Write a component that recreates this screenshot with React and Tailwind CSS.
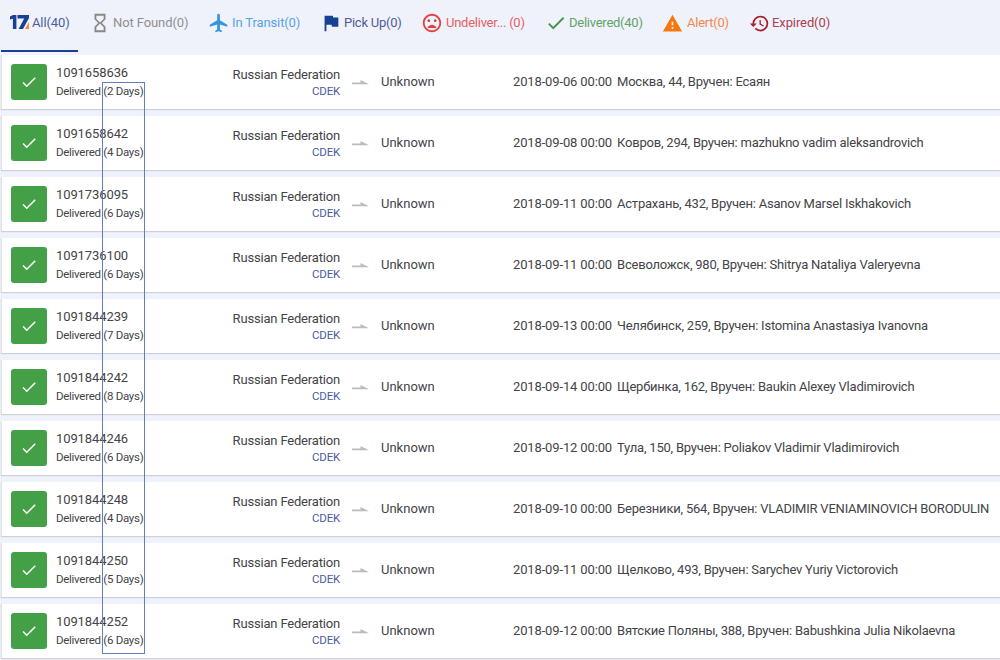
import React from "react";
import { MdFlight, MdFlag, MdMoodBad, MdCheck, MdWarning, MdHistory, MdHourglassEmpty } from "react-icons/md";

const tabs = [
  { label: "Not Found(0)", Icon: MdHourglassEmpty, box: "w-[118px] tracking-[-0.1px]", icon: "size-[22px] -ml-0.5 mr-[2px]", color: "text-[#888888]", text: "text-[#8f8f93]" },
  { label: "In Transit(0)", Icon: MdFlight, box: "w-[112px] tracking-[-0.12px]", icon: "size-[22px] mr-[2px] -ml-px", color: "text-[#3794e0]", text: "text-[#55a4e4]" },
  { label: "Pick Up(0)", Icon: MdFlag, box: "w-[102px] tracking-[-0.25px]", icon: "size-[22px] mr-[2px] -ml-[1px]", color: "text-[#164194]", text: "text-[#4f5b9c]" },
  { label: "Undeliver... (0)", Icon: MdMoodBad, box: "w-[124px] tracking-[-0.25px]", icon: "size-[22px] mr-[3px] -ml-0.5", color: "text-[#e34342]", text: "text-[#e66063]" },
  { label: "Delivered(40)", Icon: MdCheck, box: "w-[117px] tracking-[-0.25px]", icon: "size-[22px] mr-[2px] -ml-0.5", color: "text-[#46954e]", text: "text-[#5fa368]" },
  { label: "Alert(0)", Icon: MdWarning, box: "w-[86px] tracking-[-0.25px]", icon: "size-[21px] mr-[4px] -ml-0.5", color: "text-[#f5780f]", text: "text-[#f0894c]" },
  { label: "Expired(0)", Icon: MdHistory, box: "w-[100px] tracking-[-0.1px]", icon: "size-[21px] mr-[2px] -ml-px", color: "text-[#a91f2c]", text: "text-[#ac4050]" },
];

const rows = [
  ["1091658636", 2, "2018-09-06 00:00", "Москва, 44, Вручен: Есаян"],
  ["1091658642", 4, "2018-09-08 00:00", "Ковров, 294, Вручен: mazhukno vadim aleksandrovich"],
  ["1091736095", 6, "2018-09-11 00:00", "Астрахань, 432, Вручен: Asanov Marsel Iskhakovich"],
  ["1091736100", 6, "2018-09-11 00:00", "Всеволожск, 980, Вручен: Shitrya Nataliya Valeryevna"],
  ["1091844239", 7, "2018-09-13 00:00", "Челябинск, 259, Вручен: Istomina Anastasiya Ivanovna"],
  ["1091844242", 8, "2018-09-14 00:00", "Щербинка, 162, Вручен: Baukin Alexey Vladimirovich"],
  ["1091844246", 6, "2018-09-12 00:00", "Тула, 150, Вручен: Poliakov Vladimir Vladimirovich"],
  ["1091844248", 4, "2018-09-10 00:00", "Березники, 564, Вручен: VLADIMIR VENIAMINOVICH BORODULIN"],
  ["1091844250", 5, "2018-09-11 00:00", "Щелково, 493, Вручен: Sarychev Yuriy Victorovich"],
  ["1091844252", 6, "2018-09-12 00:00", "Вятские Поляны, 388, Вручен: Babushkina Julia Nikolaevna"],
];

function Logo() {
  return (
    <svg className="h-[15px] w-5 shrink-0" viewBox="0 0 20 15">
      <path d="M0 1.5 3 0h3.4v14H2.9V3.8L0 4.4z" fill="#164194" />
      <path d="M7.5 0H19v3L13 14H8.6l5.6-10.5H7.5z" fill="#164194" />
      <path d="M19 7v7h-4z" fill="#f08a3c" />
    </svg>
  );
}

function Row({ row }) {
  const [number, days, date, event] = row;
  return (
    <div className="flex h-[54px] shrink-0 items-center border-l border-[#dfe1e7] bg-white pl-[9px] text-[13px] text-[#434447] shadow-[0_1px_1px_#cfd1d6]">
      <div className="flex size-9 shrink-0 items-center justify-center rounded-[3px] bg-[#43a047] text-white">
        <MdCheck className="size-[18px]" />
      </div>
      <div className="ml-[9px] w-[119px] shrink-0">
        <div className="h-[18px] leading-[18px] tracking-[-0.1px]">{number}</div>
        <div className="h-[18px] text-[11.5px] leading-[18px] tracking-[-0.28px]">Delivered ({days} Days)</div>
      </div>
      <div className="w-[165px] shrink-0 pt-[2px] text-right">
        <div className="h-4 leading-4 tracking-[-0.18px]">Russian Federation</div>
        <div className="h-4 text-[11.5px] leading-4 tracking-[-0.2px] text-[#4b5da0]">CDEK</div>
      </div>
      <svg className="mt-0.5 ml-3 h-2 w-[18px] shrink-0" viewBox="0 0 18 8">
        <path d="M0 3.6h8.5V1L17 5.2H0z" fill="#bcbcbc" />
      </svg>
      <div className="ml-[11px] w-[132px] shrink-0">Unknown</div>
      <div className="w-[104px] shrink-0 tracking-[-0.14px] whitespace-nowrap">{date}</div>
      <div className="tracking-[-0.21px] whitespace-nowrap">{event}</div>
    </div>
  );
}

export default function App() {
  return (
    <div className="relative flex h-[660px] w-[1000px] flex-col overflow-hidden bg-[#eff2fa] font-[Roboto,sans-serif]">
      <nav className="flex h-[52px] shrink-0 pl-px text-[13px] whitespace-nowrap">
        <div className="flex w-[77px] items-center border-b-2 border-[#164194] pb-[5px] pl-[9px] text-[#4b5da0]">
          <Logo />
          <span className="ml-[2px] tracking-[-0.12px]">All(40)</span>
        </div>
        <div className="flex h-[46px] items-center pl-[13px]">
          {tabs.map(({ label, Icon, box, icon, color, text }) => (
            <div key={label} className={`flex shrink-0 items-center ${box} ${text}`}>
              <Icon className={`shrink-0 ${icon} ${color}`} />
              <span>{label}</span>
            </div>
          ))}
        </div>
      </nav>
      <main className="mt-[3px] ml-px flex flex-col gap-[7px]">
        {rows.map((row) => (
          <Row key={row[0]} row={row} />
        ))}
      </main>
      <div className="absolute top-[82px] left-[102px] h-[572px] w-[43px] border border-[#647bc5]" />
    </div>
  );
}
